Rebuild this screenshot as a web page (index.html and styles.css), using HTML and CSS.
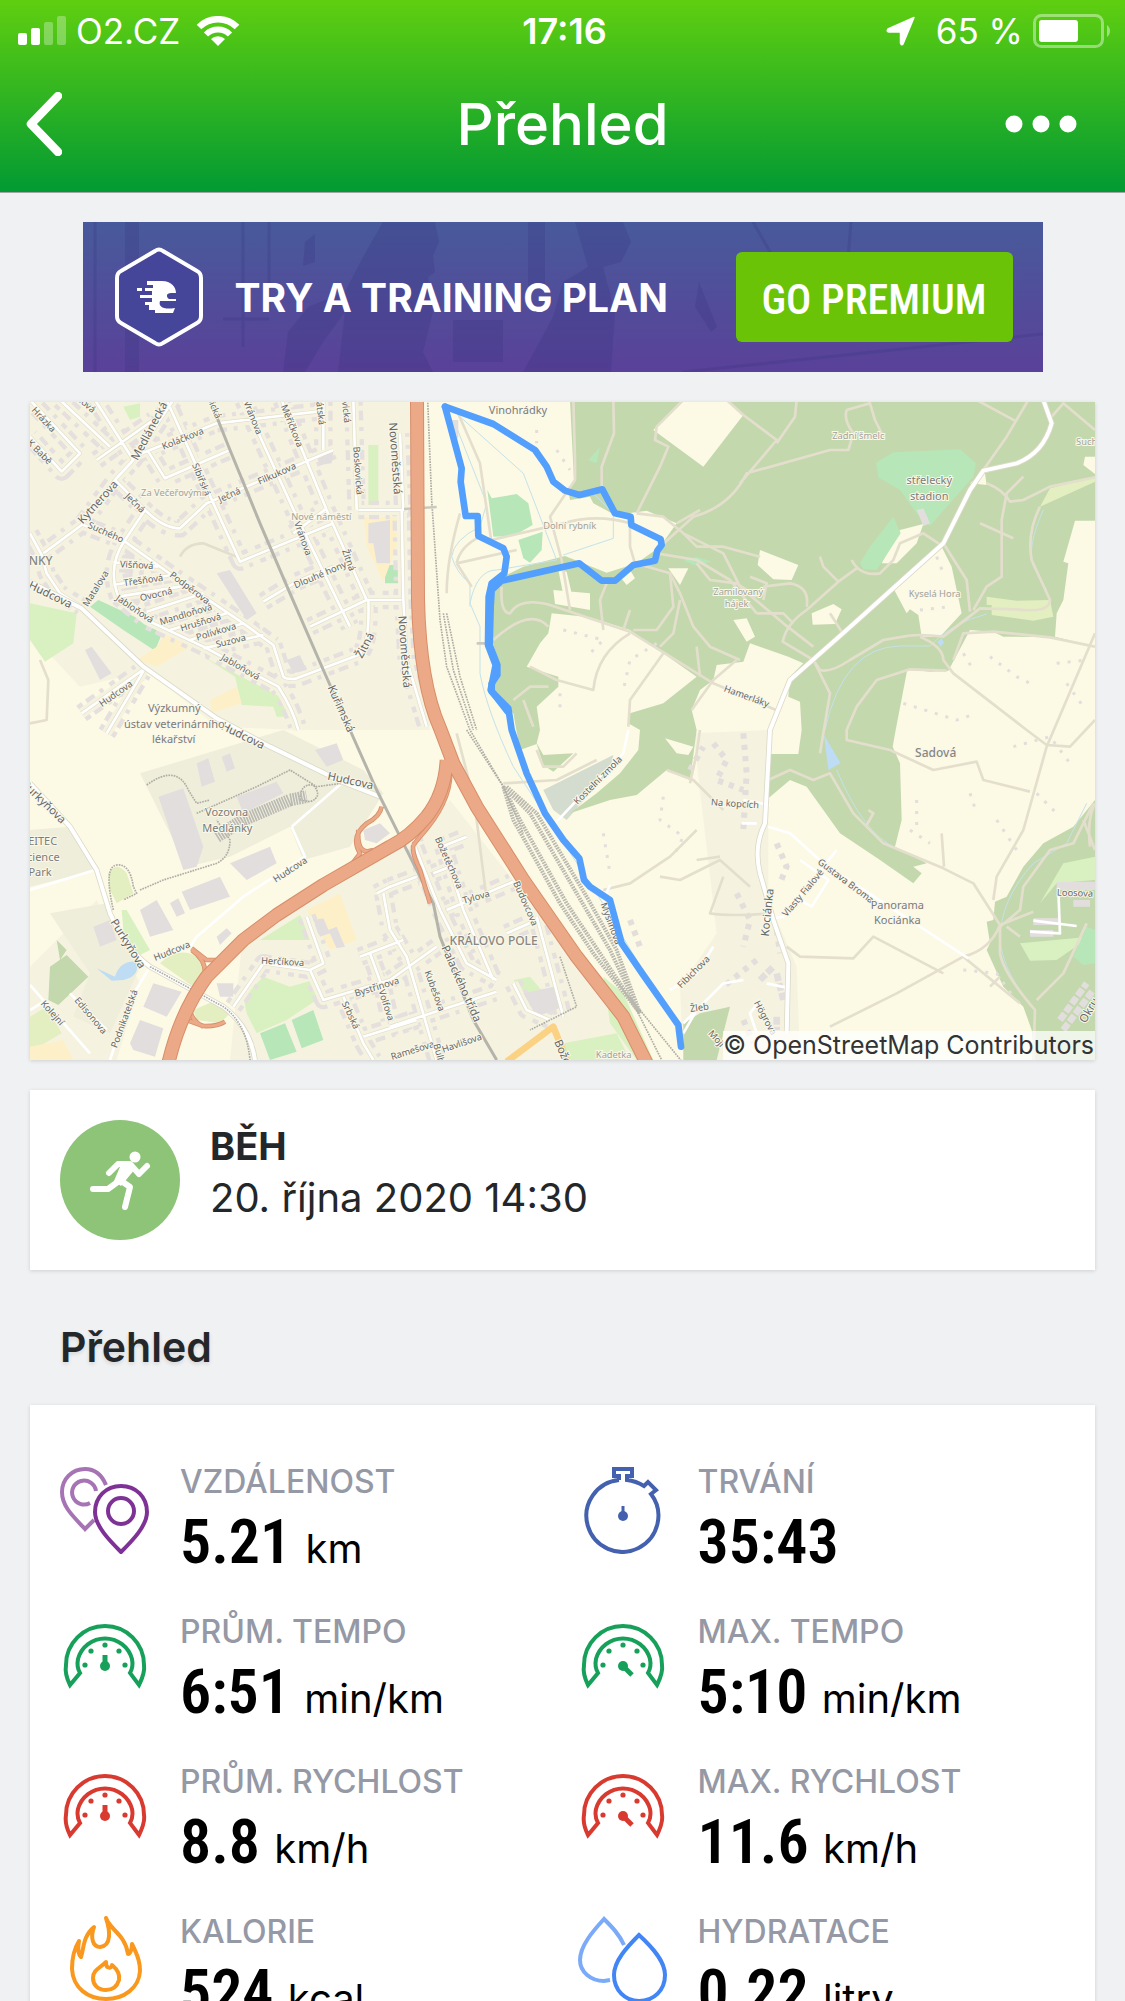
FILE: index.html
```html
<!DOCTYPE html>
<html lang="cs">
<head>
    <meta charset="UTF-8">
    <meta name="viewport" content="width=device-width, initial-scale=1.0">
    <title>Přehled</title>
    <link rel="stylesheet" href="styles.css">
</head>
<body>

    <!-- shared icons -->
    <svg class="defs" width="0" height="0">
        <defs>
            <g id="gauge">
                <path d="M10 71 C6 63 5 57 6 51 A39 39 0 0 1 84 51 C85 57 83 63 79 71 L70 59 C73 54 73 50 72 45 A28 28 0 0 0 18 45 C17 50 17 54 20 59 Z" fill="none" stroke="currentColor" stroke-width="4"/>
                <g fill="currentColor">
                    <circle cx="25" cy="51" r="2.6"/>
                    <circle cx="31" cy="37" r="2.6"/>
                    <circle cx="45" cy="31" r="2.6"/>
                    <circle cx="59" cy="37" r="2.6"/>
                    <circle cx="65" cy="51" r="2.6"/>
                    <circle cx="45" cy="52" r="5"/>
                </g>
            </g>
        </defs>
    </svg>

    <header class="header">
        <div class="status-bar">
            <div class="status-left">
                <svg class="signal" viewBox="0 0 48 30">
                    <g fill="#fff">
                        <rect x="0" y="17" width="9" height="12" rx="2"/>
                        <rect x="13" y="12" width="9" height="17" rx="2"/>
                        <rect x="26" y="6" width="9" height="23" rx="2" opacity=".3"/>
                        <rect x="39" y="0" width="9" height="29" rx="2" opacity=".3"/>
                    </g>
                </svg>
                <span>O2.CZ</span>
                <svg class="wifi" viewBox="0 0 44 30">
                    <path d="M3 11 A27 27 0 0 1 41 11" fill="none" stroke="#fff" stroke-width="6.5"/>
                    <path d="M10 18.5 A17 17 0 0 1 34 18.5" fill="none" stroke="#fff" stroke-width="6"/>
                    <path d="M22 30 L15 23 A10 10 0 0 1 29 23 Z" fill="#fff"/>
                </svg>
            </div>
            <div class="status-time">17:16</div>
            <div class="status-right">
                <svg class="location" viewBox="0 0 30 30">
                    <path d="M28 1.500 L17 28 Q15.500 30 14.500 27 V16 H3 Q0 15.500 2 13 Z" fill="#fff" stroke="#fff" stroke-width="1.500" stroke-linejoin="round"/>
                </svg>
                <span>65 %</span>
                <svg class="battery" viewBox="0 0 78 34">
                    <rect x="1.500" y="1.500" width="68" height="31" rx="7" fill="none" stroke="#fff" stroke-width="3" opacity=".42"/>
                    <rect x="6" y="6" width="39" height="22" rx="3" fill="#fff"/>
                    <path d="M74 11 C78 14 78 20 74 23 Z" fill="#fff" opacity=".45"/>
                </svg>
            </div>
        </div>
        <nav class="nav">
            <button class="nav-btn back" aria-label="Zpět">
                <svg viewBox="0 0 36 64"><path d="M32 4 L5 32 L32 60" fill="none" stroke="#fff" stroke-width="8.500" stroke-linecap="round" stroke-linejoin="round"/></svg>
            </button>
            <h1>Přehled</h1>
            <button class="nav-btn more" aria-label="Více">
                <svg viewBox="0 0 72 18"><g fill="#fff"><circle cx="9" cy="9" r="8.500"/><circle cx="36" cy="9" r="8.500"/><circle cx="63" cy="9" r="8.500"/></g></svg>
            </button>
        </nav>
    </header>

    <main class="content">

        <section class="banner">
            <svg class="banner-bg" viewBox="0 0 960 150" preserveAspectRatio="xMidYMid slice">
                <g fill="#33307c" opacity=".22">
                    <path d="M300 0 H352 L356 20 L350 34 L352 50 L345 55 L350 90 L340 130 L350 150 H255 L262 90 L240 120 L222 150 H200 L205 110 L225 85 L262 70 L280 35 Z"/>
                    <path d="M492 0 H540 L548 20 L538 40 L520 45 L532 90 L528 150 H440 L470 95 L480 60 L505 45 Z"/>
                    <path d="M370 98 H420 V140 H370 Z"/>
                    <path d="M222 20 L232 12 V40 L220 44 Z"/>
                    <path d="M445 0 H462 V65 H445 Z"/>
                    <path d="M42 0 H56 V150 H42 Z"/>
                    <path d="M616 60 L634 105 L628 110 L612 85 Z"/>
                </g>
                <g fill="none" stroke="#33307c" stroke-width="3" opacity=".22">
                    <path d="M12 0 V150 M160 0 V125 M186 0 V90 M140 97 H186 M768 0 L764 50 M600 150 L960 112 M670 0 L710 70"/>
                </g>
            </svg>
            <svg class="banner-logo" viewBox="0 0 88 100">
                <path d="M40 4 Q44 1 48 4 L82 24 Q86 26 86 31 V69 Q86 74 82 76 L48 96 Q44 99 40 96 L6 76 Q2 74 2 69 V31 Q2 26 6 24 Z" fill="#454699" stroke="#fff" stroke-width="4"/>
                <path d="M32 34 H47 C56 34 61 40 61 46 H56 C51 46 51 50 54 52 H61 V54 H45 C43 60 49 63 60 61 L58 66 H40 V63 H34 V58 H30 V55 H37 V51 H25 V48 H37 V44 H30 V41 H38 V38 H32 Z" fill="#fff"/>
                <path d="M22 41 H27 V44 H22 Z" fill="#fff"/>
            </svg>
            <p class="banner-text">TRY A TRAINING PLAN</p>
            <button class="premium">GO PREMIUM</button>
        </section>

        <section class="map">
            <svg class="map-canvas" viewBox="0 6 3195 1974">
                <defs>
                    <path id="streets" d="M0 400 L35 465 L50 520 L90 580 L155 620
                        M40 460 L155 375 L255 240 L310 180 L430 0
                        M195 0 L310 180 M90 0 L240 140 M200 180 L370 60 M0 0 L150 160 L95 215 L0 110
                        M410 0 L500 200 L630 485 L910 370 M355 155 L405 235 L600 150 M310 170 L560 70 L860 35
                        M255 240 L345 330 Q400 385 450 385 L530 310 L910 150 M345 330 L285 420 Q230 500 265 590
                        M160 375 L285 425 L425 525 L640 670 L730 735 M250 487 L385 500 M250 555 L425 525 M265 590 L450 560
                        M350 635 L520 580 M420 690 L590 640 M480 720 L640 670 M520 745 L700 705
                        M265 590 L350 660 L520 740 L745 860 Q790 930 805 990 M730 735 L760 830 Q770 840 800 835 L985 765 Q1020 740 1015 600
                        M640 0 L800 350 L960 680 M755 0 L890 330 L1010 600 M700 605 L800 545 L910 500 M840 680 L1010 600 H1115
                        M880 0 V150 M985 330 H1120 L1110 100 M970 0 L980 330 M790 400 L890 325
                        M1115 330 L1120 600 L1130 780 L1190 980
                        M230 1000 L345 805 M155 940 L345 805"/>
                    <path id="streets2" d="M1240 1340 L1300 1530 L1390 1740 M1150 1310 L1155 1340 L1230 1530 L1310 1690 L1400 1740
                        M1235 1340 L1310 1310 M1210 1420 L1260 1400 M1250 1530 L1450 1445 M1430 1600 L1520 1560
                        M1080 1460 L1160 1430 M1080 1590 L1130 1670 L1220 1980 M1080 1740 L1220 1640 M1080 1880 L1400 1775
                        M1450 1750 L1490 1830 L1560 1860 M1520 1550 L1600 1850
                        M830 1550 L880 1690 L840 1710 L880 1800 L1080 1740 M610 1820 L700 1690 L840 1710 M990 1670 L1120 1620
                        M1040 1480 L1080 1460 M1060 1480 L1080 1590 M1020 1660 L1060 1770 L1080 1860 M940 1790 L1000 1930 L1030 1980 M1000 1910 L1160 1860"/>
                    <path id="main-roads" d="M0 545 L155 625 L340 800 L560 955 L720 1040 L935 1145 L1050 1190
                        M0 1150 L120 1280 L200 1410 L240 1540 Q290 1650 360 1700 L580 1820 Q660 1880 675 1980
                        M3040 0 L3065 70 Q3040 160 2960 190 L2860 212 L2820 270 L2740 430 L2450 690 L2280 840 L2220 990 L2205 1270 Q2170 1340 2190 1420 L2230 1560 L2275 1690 L2270 1900"/>
                    <path id="ramps" d="M1150 1335 Q1145 1360 1170 1410 L1200 1510 M1260 1100 Q1270 1200 1170 1310 L1150 1335 M1055 1220 Q1050 1250 1010 1270 Q960 1310 990 1360 L960 1400 M985 1290 Q980 1370 1030 1350 M485 1645 L530 1680 H560 M485 1650 Q530 1680 525 1730 M470 1860 L520 1878 Q560 1880 585 1865 M480 1820 Q480 1860 520 1880"/>
                    <path id="motorways" d="M1250 1080 Q1245 1180 1190 1250 Q1140 1310 1080 1340 L880 1455 L740 1545 L640 1620 L530 1730 Q450 1840 415 1990
                        M1161 0 L1164 600 Q1170 850 1230 985 L1270 1090 L1340 1220 L1480 1440 L1640 1670 L1780 1850 L1850 1990"/>
                </defs>

                <rect class="land" x="0" y="0" width="3195" height="1980"/>

                <!-- built-up areas -->
                <path class="urban" d="M0 0 H1160 V640 L1200 990 H800 L560 980 L345 805 L150 930 L0 700 Z"/>
                <path class="urban" d="M0 1700 L200 1500 L330 1750 L260 1980 H0 Z M640 1590 L850 1490 L1080 1360 L1260 1200 L1480 1480 L1860 1980 H600 Z"/>
                <path class="urban" d="M1990 1000 L2215 990 V1500 L2300 1700 L2310 1980 H1960 L1950 1760 L2060 1600 Z"/>
                <path class="farm" d="M0 700 L150 860 L340 815 L210 940 L0 1010 Z"/>
                <path class="works" d="M330 1120 L760 990 L1000 1110 L1060 1180 L960 1340 L820 1380 L780 1280 L600 1370 L470 1400 Z"/>
                <path class="works" d="M0 1290 L120 1280 L200 1410 L0 1460 Z M60 1540 L230 1510 L330 1700 L240 1900 L130 1850 L180 1720 Z"/>
                <path class="quarry" d="M1540 1170 L1750 1065 L1740 1110 L1610 1260 L1570 1230 Z"/>

                <!-- woods -->
                <path class="forest" d="M1620 0 L1632 240 L1615 270 L1620 300 L1680 290 L1690 310 L1755 345 L1850 332 L1940 370 L1890 440 L1820 490 L1730 518 L1605 468 L1480 500 L1410 535 L1385 600 L1380 700 L1410 800 L1385 890 L1450 940 L1470 1050 L1520 1032 L1540 1095 L1570 1115 L1630 1060 L1540 1065 L1520 1030 L1530 990 L1520 920 L1585 860 V830 L1490 800 L1530 730 L1555 700 L1565 640 L1680 652 L1800 690 L2000 830 L1900 910 L1800 940 L1795 970 L1830 990 L1825 1050 L1770 1120 L1700 1180 L1620 1240 L1740 1200 L1820 1185 L1910 1110 L1980 1140 L2000 990 L1985 930 L2010 870 L2050 840 L2060 795 L2140 785 L2160 730 L2275 770 L2320 790 L2280 830 L2275 890 L2310 905 L2315 990 L2305 1062 H2215 V1195 L2280 1140 L2330 1160 L2430 1300 L2550 1380 L2650 1450 L2675 1420 L2650 1400 L2690 1390 L2595 1340 L2615 1260 L2610 1090 L2588 1040 L2597 990 L2632 808 L2700 815 L2755 812 L2820 690 L2890 695 L2920 710 L3070 712 L3195 740 V0 Z"/>
                <path class="forest" d="M3195 1200 L3130 1280 L3040 1330 L2980 1400 L2930 1490 L2895 1505 L2890 1560 L2870 1565 L2880 1630 L2870 1650 L2920 1760 L2980 1820 L3005 1890 L3015 1980 H3195 Z"/>
                <path class="forest" d="M55 1800 L60 1700 L110 1665 L175 1730 L85 1815 Z M1960 1980 V1870 L2010 1840 L2100 1820 L2060 1980 Z M80 1620 L110 1650 L90 1680 Z"/>

                <!-- clearings -->
                <path class="land" d="M1960 0 L1870 90 L2020 200 L2140 45 L2085 0 Z M2190 450 L2305 495 L2285 540 L2230 538 L2183 495 Z M1915 505 L1975 505 L1950 555 Z M1570 570 L1680 580 V630 L1575 612 Z M1585 510 L1610 515 L1625 580 L1600 585 Z M1770 530 L1800 510 L1815 535 L1790 555 Z M2110 660 L2150 655 L2175 710 L2150 725 Z M2345 640 L2410 612 L2435 628 L2415 672 L2348 674 Z"/>
                <path class="land" d="M2590 565 L2735 440 L2765 500 L2795 640 L2730 710 H2675 L2665 645 L2640 628 L2630 640 Z M3135 362 H3195 V740 L3075 710 L3080 640 L3100 600 L3115 490 L3100 485 Z M3165 170 H3195 V222 L3160 195 Z M1905 1015 L1990 1040 L1975 1065 L1940 1060 Z M2610 390 L2680 372 L2660 430 L2600 490 H2555 Z M2820 250 L2865 220 L2870 255 Z"/>
                <path class="meadow" d="M3030 320 L3060 265 L3195 232 V245 Z M2870 590 L2960 602 L3060 600 L3070 650 L3010 662 L2885 645 V615 H2870 Z M235 1420 Q260 1380 290 1420 L310 1480 L260 1510 L240 1470 Z M390 1690 Q450 1630 520 1680 V1740 L490 1760 Z M490 1830 L560 1800 L600 1840 L570 1870 L500 1860 Z M0 1850 L50 1820 L95 1900 L0 1955 Z"/>
                <path class="park" d="M0 610 L140 640 L130 730 L45 785 L0 720 Z M280 20 L330 10 V50 L300 60 Z M1015 135 H1045 V320 H1015 Z M520 770 L750 890 L775 950 H740 L730 920 L635 915 L615 830 Z M690 1620 L810 1545 L850 1620 Z M640 1790 L700 1730 L780 1760 L850 1740 L860 1800 L770 1860 L680 1900 L650 1840 Z M1720 1730 L1780 1780 L1870 1980 H1820 L1740 1870 Z M1600 1930 L1760 1900 L1800 1980 H1600 Z M3030 1510 L3100 1390 L3195 1370 V1440 L3080 1450 Z M2970 1630 L3180 1610 L3080 1680 L3000 1682 Z M1450 1740 L1500 1730 L1560 1800 L1530 1830 Z M275 1530 L290 1530 L360 1650 L320 1670 L280 1590 Z"/>
                <path class="pitch" d="M1372 270 L1385 295 L1460 282 L1495 310 L1508 375 L1450 408 L1390 410 Z M1465 420 L1538 395 L1535 450 L1500 488 L1480 475 Z M180 620 L205 600 L400 690 L375 752 L280 690 Z M2538 188 L2590 157 L2790 148 L2838 190 L2830 230 L2700 378 L2660 340 L2610 270 L2545 232 Z M2490 490 L2520 440 L2590 350 L2612 400 L2540 510 L2500 508 Z M690 1900 L765 1870 L800 1955 L720 1980 Z M785 1860 L850 1830 L880 1920 L815 1945 Z M3130 1670 L3170 1580 L3195 1590 V1690 L3160 1695 Z M1065 495 H1110 V550 H1065 Z M1675 180 L1710 140 L1700 190 Z M1960 480 L2000 470 L2045 485 L1990 495 Z"/>
                <path class="school" d="M1000 350 H1100 V440 L1060 545 L1010 440 Z M540 900 L620 860 L635 910 L545 940 Z M380 740 L410 700 L480 740 L380 800 L320 780 Z M830 1530 L930 1480 L980 1620 L900 1650 Z M0 1940 L100 1920 L130 1980 H0 Z"/>
                <path class="water" d="M200 1705 L255 1730 Q270 1680 320 1685 Q330 1730 280 1740 L245 1742 Z M2382 1005 L2432 1090 L2395 1110 Z M2722 725 L2735 715 L2742 728 L2732 740 Z"/>
                <path class="stream" d="M1290 50 L1480 220 L1580 480 L1400 510 Q1340 510 1320 610 L1350 680 V820 Q1370 930 1450 1100 L1700 1480 L1940 1880 M1275 70 L1370 310 L1350 380 Q1270 420 1265 470 Q1280 520 1320 550 V620 M1690 280 L1750 340 V415 L1600 465 M2385 990 Q2440 740 2610 738 H2700 Q2760 670 2870 642 M2420 1110 Q2500 1300 2600 1345 L2740 1405 M3170 1210 L3110 1330 L3010 1390 Q2910 1500 2910 1620 Q2920 1720 3015 1830 M3040 330 Q2990 440 3010 500 L3050 570"/>

                <!-- houses along the streets -->
                <use href="#streets" class="houses"/>
                <use href="#streets2" class="houses"/>
                <use href="#streets" class="yards"/>
                <use href="#streets2" class="yards"/>
                <path class="building" d="M1015 370 L1080 360 V490 H1040 L1030 430 H1015 Z M385 1190 L460 1165 L520 1340 L500 1400 L460 1410 Z M500 1090 L535 1075 L555 1145 L515 1160 Z M575 1070 L600 1060 L615 1105 L590 1115 Z M620 1190 L740 1145 L760 1180 L640 1240 Z M455 1475 L570 1430 L600 1490 L480 1530 Z M330 1530 L380 1500 L430 1590 L360 1610 Z M600 1390 L720 1340 L740 1390 L650 1440 Z M420 1510 L445 1495 L465 1540 L440 1550 Z M340 1820 L370 1750 L455 1775 L410 1850 Z M300 1930 L330 1860 L400 1885 L375 1970 L310 1950 Z M855 1050 L920 1030 L940 1080 L890 1100 Z M190 1580 L240 1560 L260 1620 L210 1640 Z M560 1610 L590 1585 L605 1600 L570 1635 Z M860 170 L910 155 L905 190 L870 195 Z M560 520 L600 510 L680 640 L650 660 Z M165 750 L185 740 L245 820 L210 840 Z M1480 1780 L1570 1760 L1600 1820 L1520 1850 Z M1000 1290 L1050 1270 L1080 1300 L1040 1330 L1005 1320 Z M3080 1445 H3195 V1470 H3080 Z M3010 1555 H3090 V1575 H3010 Z M3000 1590 H3070 V1610 H3000 Z M3130 1500 H3180 V1520 H3130 Z M770 780 L810 765 L830 810 L790 820 Z M560 1750 H610 V1790 H570 Z M850 1560 L880 1555 L900 1600 L870 1610 Z M895 1590 L920 1580 L945 1640 L920 1645 Z M1260 60 H1285 V115 H1270 Z M2660 330 L2680 325 L2700 370 L2680 378 Z"/>
                <path class="specks" d="M1520 90 V130 M1580 150 L1620 210 M1880 730 L1800 780 L1780 870 M1600 690 L1720 720 L1680 760 M1590 880 V940 M2670 630 L2760 620 M2720 470 L2740 520 M2800 760 L2830 810 M2880 770 L2960 830 L3000 850 M3080 790 L3170 780 M3110 850 L3160 920 M2620 910 L2780 960 L2840 940 M2640 1290 L2700 1330 M2660 1200 V1290 M2820 1180 L2840 1240 M2900 1260 L2960 1350 M2950 1040 L3060 1010 L3120 1090 M3020 1180 L3080 1240 M2800 1710 L2900 1720 L2950 1790 M1900 1190 L1890 1260 L1960 1310 L1930 1370 M1720 1300 L1740 1420"/>
                <path class="cottages" d="M1980 1110 L2020 1040 M2050 1030 L2090 1080 L2060 1140 L2140 1170 M1800 1560 L1830 1640 M2240 1330 L2270 1400 L2250 1450 M2140 1000 L2150 1120 L2140 1290 M2240 1590 L2250 1660 M2120 1480 L2160 1560 L2140 1640 M2180 1680 L2080 1760 M2140 1860 L2170 1930"/>
                <path class="shed" d="M3090 1860 L3170 1750 M3100 1890 L3190 1770 M2190 1740 L2230 1700 M2240 1720 L2260 1800 M2240 1850 V1890"/>

                <!-- paths -->
                <g class="track">
                    <path d="M1630 0 L1635 180 L1635 240 L1560 350 L1595 480 L1620 630 M1750 0 L1752 100 L1715 200 V265 M1280 30 L1350 190 L1385 430 M1385 420 L1600 370 Q1700 340 1800 370 M1280 490 Q1290 440 1350 410 M1280 490 L1460 450 M1280 490 L1325 560 M1250 580 Q1250 480 1290 340 M1415 560 Q1410 640 1440 640 Q1470 590 1560 615 L1800 695 L2050 850 L2250 935 M1390 720 Q1500 620 1555 680"/>
                    <path d="M2090 0 L2140 45 L2240 120 L2130 250 M2300 0 L2295 50 L2240 130 M1960 0 L1880 80 L1875 120 L1915 140 L1890 200 L1820 340 M1800 350 L1800 440 L1815 490 M1890 440 L1990 350 Q2100 320 2150 220 L2400 150 M1940 370 L2010 330 M1820 340 L1900 350 L1960 400 L2000 440 L2080 440 L2190 470 M1880 460 L2000 480 L2100 540 L2180 640 M1815 490 L1920 520 L1950 580 L1990 680 L2040 740 L2130 780 M2000 490 L2040 540 L2120 550 L2180 590 M1960 400 L2080 460 L2130 560 L2260 670 L2350 740 M2200 560 L2280 550 Q2340 560 2330 620 M2160 530 L2210 550 L2200 600"/>
                    <path d="M1920 520 L1930 620 L1880 690 L1810 690 M1950 600 L1930 700 L1890 740 M2000 740 L2010 830 M1720 690 L1710 600 L1730 550 M1780 690 L1800 630 M2180 640 L2260 640 L2290 670"/>
                    <path d="M2450 30 Q2440 60 2470 100 L2455 150 H2400 M2450 30 L2520 10 L2535 60 L2560 110 M2370 470 L2380 500 L2425 545 L2330 630 Q2270 670 2258 725 L2350 780 M2425 545 L2480 505 M2465 480 Q2490 530 2550 520 L2590 480 L2610 430 L2680 400 L2740 440 M2435 695 L2400 640 M2840 0 L2960 65 M2995 0 L2930 110 L2860 210 M3065 50 L3100 10 L3195 90 M2870 250 Q2920 270 2940 305 L2980 300 L3060 260 L3195 232"/>
                    <path d="M2980 230 L2930 280 L2915 360 V530 L2870 560 L2830 630 M2850 370 L2950 415 M3030 320 Q2990 400 3005 480 L3060 600 Q3060 640 2960 628 L2850 625 L2740 710 Q2660 700 2620 710 L2560 720 L2460 780 Q2400 820 2370 810 L2350 780 L2400 880 L2370 1060 M2820 635 L2810 540 L2740 430 M2670 710 Q2740 740 2740 780 L2770 820 L2990 990 L3050 1035 L3120 1040 L3195 960 M2770 780 L2800 700 L2890 695 L3060 712 L3195 740 M2750 812 L2640 808 L2540 840 L2480 920 L2450 990 L2450 1020 L2580 1050 L2710 1110 L2840 1085 L2860 1140 L3000 1175 M3195 700 L3050 1040 L2980 1290 L2900 1430 L2890 1500"/>
                    <path d="M2215 1140 L2280 1110 L2350 1140 L2400 1120 L2470 1240 L2560 1330 L2740 1405 L2830 1450 L2910 1575 Q2880 1650 2800 1670 L2600 1780 L2400 1880 M2510 1275 L2530 1240 L2515 1230 M2735 1300 L2742 1400 M3195 1210 Q3170 1260 3180 1340 M3190 1210 L3130 1330 L3060 1350 L2980 1460 L2970 1530 L2910 1580 L2910 1660 Q2920 1720 3015 1830 L3010 1980 M3020 1800 L3100 1720 L3170 1570 M2910 1575 L3010 1535 M3195 1350 L3160 1260 M2930 1580 L2970 1610 M2270 1640 L2310 1670 L2470 1675 L2530 1610 L2740 1720 M2800 1670 L2970 1810 M2880 1760 L2910 1730"/>
                    <path d="M1420 1150 L1580 1140 L1700 1080 M1520 1050 L1540 1100 L1600 1100 L1640 1060 M1450 900 L1500 860 L1555 860 M1480 900 L1510 980 M1500 800 L1580 840 L1690 870 Q1700 760 1800 700 M1900 760 L1800 900 L1795 980 M1985 930 L2050 840 L2120 780 M1720 1470 L1800 1450 L1920 1370 L2000 1290 M1890 1430 L1950 1440 L2070 1380 L2160 1460 M2070 1370 L2000 1380 M2220 1540 Q2100 1550 2040 1540 L2080 1430 M1980 1150 L2000 1060 L2010 990 M2080 1230 L1990 1140 L1910 1110 M1330 1180 L1370 1500 M1280 1000 L1340 1230 M30 780 L55 840 L50 960 L0 970 M450 470 Q470 430 520 430 L620 470"/>
                </g>

                <!-- streets -->
                <use href="#streets" class="casing"/>
                <use href="#streets2" class="casing"/>
                <use href="#streets" class="street"/>
                <use href="#streets2" class="street"/>
                <path class="street" d="M785 1280 L825 1370 L640 1490 L500 1610 L480 1640 M935 1150 L785 1280 M360 1700 L300 1800 L240 1980 M0 1755 L180 1960 M0 1830 L50 1800 M0 1470 L195 1410 M120 1780 L230 1890 M1580 1265 L1660 1180 L1780 1060 L1795 990 M1720 1500 L1740 1455 M2220 1215 L2140 1200 M2180 1270 L2135 1270 M2200 1560 L2260 1550 L2420 1350 M2310 1380 L2395 1440 L2345 1520 L2310 1500 M2215 1280 L2280 1300 L2380 1390 L2815 1675 M2210 1750 L2280 1765 M2190 1800 L2160 1840 L2180 1900 M3085 1470 L3090 1600 L3000 1595 M3010 1562 L3140 1578 M1960 1870 L2080 1750 L2140 1740 M1920 1770 L2000 1720 L2050 1640 M1960 1900 L2000 1830"/>
                <use href="#main-roads" class="road-casing"/>
                <use href="#main-roads" class="road"/>
                <path class="yellow-road" d="M1430 1985 L1570 1880 L1610 1980"/>

                <!-- railway -->
                <path class="tram" d="M540 0 L600 150 L690 370 L780 580 L880 810 L960 990 L1040 1170 L1080 1250 L1210 1510 L1230 1610 L1330 1860 L1400 1980"/>
                <path class="rail" d="M1193 0 L1205 300 L1230 660 L1250 800 L1320 990 L1420 1160 M1240 640 L1270 810 L1330 990 M1250 640 L1290 830 L1340 990 M350 1155 Q440 1090 475 1170 L500 1210 L540 1200 M500 1240 L680 1160 L780 1110 L860 1160 L935 1150 M330 1470 L400 1440 L560 1390 Q600 1370 600 1320 L560 1260 M250 1530 Q220 1400 260 1395 Q300 1390 310 1460 L320 1480 L280 1500 M360 1700 L580 1820 Q650 1870 660 1980 M1590 1670 L1640 1820 L1500 1890 M810 1200 Q810 1150 850 1155 Q880 1190 840 1205 Z"/>
                <path class="yard" d="M560 1310 L640 1260 L780 1200 L830 1190"/>
                <path class="rail-yard" d="M1420 1160 L1450 1260 L1590 1510 L1690 1660 L1830 1840 M1420 1160 L1470 1260 L1610 1510 L1710 1660 L1830 1840 M1420 1160 L1500 1240 L1640 1480 L1740 1650 L1830 1840 M1430 1160 L1520 1240 L1670 1490 L1760 1650 L1830 1840"/>
                <path class="rail" d="M1310 990 L1420 1160 L1480 1300 M1830 1830 L1960 1990 M1820 1830 L1900 1990"/>
                <path class="bridge" d="M1122 327 L1220 321 M1340 730 H1370"/>

                <!-- motorway -->
                <use href="#ramps" class="ramp-edge"/>
                <use href="#ramps" class="ramp"/>
                <use href="#motorways" class="motorway-edge"/>
                <use href="#motorways" class="motorway"/>

                <!-- labels -->
                <g class="label">
                    <text transform="translate(42 58) rotate(47)">Hrázka</text>
                    <text transform="translate(30 155) rotate(45)">K Babě</text>
                    <text transform="translate(170 12) rotate(40)">ková</text>
                    <text transform="translate(458 115) rotate(-22)">Koláčkova</text>
                    <text transform="translate(515 238) rotate(68)">Sibiřská</text>
                    <text transform="translate(557 30) rotate(66)">ická</text>
                    <text transform="translate(598 284) rotate(-24)">Ječná</text>
                    <text transform="translate(316 308) rotate(44)">Ječná</text>
                    <text transform="translate(740 220) rotate(-24)">Filkukova</text>
                    <text transform="translate(670 52) rotate(68)">Vránova</text>
                    <text transform="translate(787 77) rotate(68)">Měřičkova</text>
                    <text transform="translate(873 40) rotate(84)">átská</text>
                    <text transform="translate(950 36) rotate(84)">vická</text>
                    <text transform="translate(985 212) rotate(86)">Boskovická</text>
                    <text transform="translate(820 415) rotate(70)">Vránova</text>
                    <text transform="translate(957 480) rotate(70)">Žitná</text>
                    <text transform="translate(870 523) rotate(-23)">Dlouhé hony</text>
                    <text transform="translate(228 396) rotate(24)">Suchého</text>
                    <text transform="translate(320 494) rotate(3)">Višňová</text>
                    <text transform="translate(340 540) rotate(-8)">Třešňová</text>
                    <text transform="translate(378 582) rotate(-13)">Ovocná</text>
                    <text transform="translate(480 563) rotate(37)">Podpěrova</text>
                    <text transform="translate(196 565) rotate(-58)">Matalova</text>
                    <text transform="translate(315 626) rotate(34)">Jabloňová</text>
                    <text transform="translate(467 642) rotate(-17)">Mandloňová</text>
                    <text transform="translate(512 666) rotate(-17)">Hrušňová</text>
                    <text transform="translate(558 694) rotate(-17)">Polívkova</text>
                    <text transform="translate(602 722) rotate(-14)">Suzova</text>
                    <text transform="translate(632 800) rotate(30)">Jabloňová</text>
                    <text transform="translate(257 880) rotate(-35)">Hudcova</text>
                    <text transform="translate(780 1408) rotate(-33)">Hudcova</text>
                    <text transform="translate(425 1652) rotate(-22)">Hudcova</text>
                    <text transform="translate(758 1684) rotate(3)">Herčíkova</text>
                    <text transform="translate(1040 1760) rotate(-17)">Bystřinova</text>
                    <text transform="translate(963 1845) rotate(65)">Srbská</text>
                    <text transform="translate(1070 1815) rotate(72)">Volfova</text>
                    <text transform="translate(68 1838) rotate(48)">Kolejní</text>
                    <text transform="translate(183 1846) rotate(50)">Edisonova</text>
                    <text transform="translate(282 1856) rotate(-70)">Podnikatelská</text>
                    <text transform="translate(1258 1388) rotate(66)">Božetěchova</text>
                    <text transform="translate(1338 1490) rotate(-16)">Tylova</text>
                    <text transform="translate(1488 1510) rotate(66)">Budovcova</text>
                    <text transform="translate(1215 1772) rotate(70)">Kubešova</text>
                    <text transform="translate(1295 1928) rotate(-19)">Havlišova</text>
                    <text transform="translate(1147 1950) rotate(-17)">Ramešova</text>
                    <text transform="translate(1228 1960) rotate(75)">Bulh</text>
                    <text transform="translate(1744 1570) rotate(70)">Myslínova</text>
                    <text transform="translate(1703 1140) rotate(-45)">Kostelní zmola</text>
                    <text transform="translate(2115 1210) rotate(4)">Na kopcích</text>
                    <text transform="translate(1990 1715) rotate(-45)">Fibichova</text>
                    <text transform="translate(2008 1822) rotate(-8)">Žleb</text>
                    <text transform="translate(2060 1915) rotate(48)">Moji</text>
                    <text transform="translate(2150 888) rotate(20)">Hamerláky</text>
                    <text transform="translate(2318 1478) rotate(-50)">Vlasty Fialové</text>
                    <text transform="translate(2448 1442) rotate(37)">Gustava Broma</text>
                    <text transform="translate(2207 1853) rotate(62)">Högrova</text>
                    <text transform="translate(3135 1478) rotate(2)">Loosova</text>
                </g>
                <g class="label mid">
                    <text transform="translate(356 92) rotate(-62)">Medlánecká</text>
                    <text transform="translate(202 305) rotate(-48)">Kytnerova</text>
                    <text transform="translate(62 582) rotate(26)">Hudcova</text>
                    <text transform="translate(1003 735) rotate(-62)">Žitná</text>
                    <text transform="translate(935 925) rotate(66)">Kuřimská</text>
                    <text transform="translate(640 1005) rotate(26)">Hudcova</text>
                    <text transform="translate(962 1140) rotate(12)">Hudcova</text>
                    <text transform="translate(43 1204) rotate(44)">Purkyňova</text>
                    <text transform="translate(296 1630) rotate(58)">Purkyňova</text>
                    <text transform="translate(1098 175) rotate(86)">Novoměstská</text>
                    <text transform="translate(1126 755) rotate(86)">Novoměstská</text>
                    <text transform="translate(1296 1750) rotate(66)">Palackého třída</text>
                    <text transform="translate(1600 1955) rotate(66)">Bože</text>
                    <text transform="translate(2210 1537) rotate(-84)">Kociánka</text>
                    <text transform="translate(3175 1830) rotate(-60)">Okru</text>
                </g>
                <g class="label place">
                    <text x="428" y="276">Za Večeřovými</text>
                    <text x="874" y="349">Nové náměstí</text>
                    <text x="1619" y="375">Dolní rybník</text>
                    <text x="2125" y="575">Zamilovaný</text>
                    <text x="2120" y="611">hájek</text>
                    <text x="2485" y="106">Zadní šmelc</text>
                    <text x="2714" y="580">Kyselá Hora</text>
                    <text x="3170" y="125">Such</text>
                    <text x="1751" y="1964">Kadetka</text>
                </g>
                <g class="label area">
                    <text x="1464" y="27">Vinohrádky</text>
                    <text x="433" y="923">Výzkumný</text>
                    <text x="433" y="970">ústav veterinárního</text>
                    <text x="431" y="1016">lékařství</text>
                    <text x="590" y="1233">Vozovna</text>
                    <text x="592" y="1281">Medlánky</text>
                    <text x="38" y="1321">EITEC</text>
                    <text x="40" y="1368">cience</text>
                    <text x="30" y="1415">Park</text>
                    <text x="2698" y="238">střelecký</text>
                    <text x="2698" y="285">stadion</text>
                    <text x="2602" y="1514">Panorama</text>
                    <text x="2602" y="1559">Kociánka</text>
                </g>
                <g class="label town">
                    <text x="32" y="480">NKY</text>
                    <text x="1391" y="1622">KRÁLOVO POLE</text>
                    <text x="2717" y="1058">Sadová</text>
                </g>

                <!-- recorded route -->
                <path class="route" d="M1245 20 L1390 72 L1515 150 L1550 200 L1570 245 L1605 272 L1648 285 L1717 268 L1755 340 L1802 350 L1804 375 L1892 418 L1895 435 L1882 452 L1875 482 L1810 495 L1755 542 H1715 L1648 490 L1415 542 L1385 570 L1382 620 L1379 735 L1402 795 V825 L1385 850 V875 L1435 925 L1445 990 L1490 1120 L1545 1240 L1600 1320 L1648 1375 L1662 1440 L1680 1460 L1740 1500 L1775 1630 L1840 1725 L1945 1875 L1953 1940"/>
                <path class="route" d="M1245 20 L1295 205 L1292 245 L1307 348 H1343 L1345 408 L1420 445 L1430 470 L1423 520 L1385 550 L1376 590 L1374 735 L1397 795 L1382 870 L1433 935"/>
            </svg>
            <div class="attribution">© OpenStreetMap Contributors</div>
        </section>

        <section class="card activity">
            <div class="activity-icon">
                <svg viewBox="0 0 120 120">
                    <circle cx="75" cy="37" r="5.500" fill="#fff"/>
                    <g fill="none" stroke="#fff" stroke-width="6" stroke-linecap="round" stroke-linejoin="round">
                        <path d="M49 53 L58 44 H70 L79 54 L87 46"/>
                        <path d="M59 61 L48 69 H33"/>
                        <path d="M60 60 L70 67 L65 87"/>
                    </g>
                    <path d="M62 42 H71 L75 49 L66 60 L61 66 L54 61 Z" fill="#fff"/>
                </svg>
            </div>
            <div class="activity-text">
                <h2>BĚH</h2>
                <p>20. října 2020 14:30</p>
            </div>
        </section>

        <h2 class="section-title">Přehled</h2>

        <section class="card stats">
            <div class="stat">
                <svg class="stat-icon" viewBox="0 0 90 90">
                    <g fill="none" stroke-width="4">
                        <g stroke="#a673b5">
                            <path d="M46 21 C41 9 34 5 25 5 C12 5 2 15 2 28 C2 43 14 53 25 65 L34 56"/>
                            <path d="M36 27 A12 12 0 1 0 30 39"/>
                        </g>
                        <g stroke="#7f3296">
                            <path d="M61 88 C50 77 35 62 35 48 C35 33 46 22 61 22 C76 22 87 33 87 48 C87 62 72 77 61 88 Z"/>
                            <circle cx="61" cy="47" r="13"/>
                        </g>
                    </g>
                </svg>
                <div class="stat-text">
                    <div class="stat-label">VZDÁLENOST</div>
                    <div class="stat-value">5.21 <span>km</span></div>
                </div>
            </div>
            <div class="stat">
                <svg class="stat-icon" viewBox="0 0 90 90">
                    <path d="M41 16 V12 H36 V5 H54 V12 H49 V16 Q58 17 66 22 L70 18 L78 26 L73 30 A36 36 0 1 1 41 16" fill="none" stroke="#4361ae" stroke-width="4"/>
                    <circle cx="45" cy="52" r="5" fill="#4361ae"/>
                    <path d="M45 42 V52" stroke="#4361ae" stroke-width="3"/>
                </svg>
                <div class="stat-text">
                    <div class="stat-label">TRVÁNÍ</div>
                    <div class="stat-value">35:43</div>
                </div>
            </div>
            <div class="stat">
                <svg class="stat-icon green" viewBox="0 0 90 90">
                    <use href="#gauge"/>
                    <path d="M45 41 V52" stroke="currentColor" stroke-width="5"/>
                </svg>
                <div class="stat-text">
                    <div class="stat-label">PRŮM. TEMPO</div>
                    <div class="stat-value">6:51 <span>min/km</span></div>
                </div>
            </div>
            <div class="stat">
                <svg class="stat-icon green" viewBox="0 0 90 90">
                    <use href="#gauge"/>
                    <path d="M45 52 L54 61" stroke="currentColor" stroke-width="5"/>
                </svg>
                <div class="stat-text">
                    <div class="stat-label">MAX. TEMPO</div>
                    <div class="stat-value">5:10 <span>min/km</span></div>
                </div>
            </div>
            <div class="stat">
                <svg class="stat-icon red" viewBox="0 0 90 90">
                    <use href="#gauge"/>
                    <path d="M45 41 V52" stroke="currentColor" stroke-width="5"/>
                </svg>
                <div class="stat-text">
                    <div class="stat-label">PRŮM. RYCHLOST</div>
                    <div class="stat-value">8.8 <span>km/h</span></div>
                </div>
            </div>
            <div class="stat">
                <svg class="stat-icon red" viewBox="0 0 90 90">
                    <use href="#gauge"/>
                    <path d="M45 52 L54 61" stroke="currentColor" stroke-width="5"/>
                </svg>
                <div class="stat-text">
                    <div class="stat-label">MAX. RYCHLOST</div>
                    <div class="stat-value">11.6 <span>km/h</span></div>
                </div>
            </div>
            <div class="stat">
                <svg class="stat-icon" viewBox="0 0 90 90">
                    <g fill="none" stroke="#f9981d" stroke-width="4" stroke-linejoin="round">
                        <path d="M46 4 C50 16 65 20 68 40 C70 40 72 36 72 30 C79 44 80 50 80 57 C79 74 64 85 46 85 C28 85 13 74 12 55 C12 44 14 35 19 27 C17 38 19 41 21 43 C24 34 23 22 34 13 C30 24 33 33 40 33 C52 32 50 16 46 4 Z"/>
                        <path d="M46 48 C46 56 52 54 52 51 C58 56 60 61 59 66 C57 73 52 76 46 76 C38 76 33 71 33 64 C33 56 40 54 46 48 Z"/>
                    </g>
                </svg>
                <div class="stat-text">
                    <div class="stat-label">KALORIE</div>
                    <div class="stat-value">524 <span>kcal</span></div>
                </div>
            </div>
            <div class="stat">
                <svg class="stat-icon" viewBox="0 0 90 90">
                    <g fill="none" stroke-width="4">
                        <path d="M46 31 C41 20 34 13 26 5 C15 17 2 32 2 46 C2 58 13 67 26 67 L32 66" stroke="#7baaf9"/>
                        <path d="M61 21 C49 33 36 47 36 61 C36 76 47 87 61 87 C76 87 87 76 87 61 C87 47 74 33 61 21 Z" stroke="#4285f4"/>
                    </g>
                </svg>
                <div class="stat-text">
                    <div class="stat-label">HYDRATACE</div>
                    <div class="stat-value">0.22 <span>litry</span></div>
                </div>
            </div>
        </section>
    </main>

</body>
</html>
```

FILE: styles.css
```css
* {
    margin: 0;
    padding: 0;
    box-sizing: border-box;
}

html, body {
    height: 100%;
}

body {
    display: flex;
    flex-direction: column;
    font-family: Inter, "Liberation Sans", sans-serif;
    background-color: #f0f1f3;
    color: #24272a;
    overflow: hidden;
}

svg {
    display: block;
    flex-shrink: 0;
}

.defs {
    position: absolute;
}

button {
    border: none;
    background: none;
    cursor: pointer;
    font-family: inherit;
}

/* header */
.header {
    flex-shrink: 0;
    background: linear-gradient(#5fcf10, #029a33);
    border-bottom: 1px solid #a3a3a8;
    color: #fff;
}

.status-bar {
    display: grid;
    grid-template-columns: 1fr auto 1fr;
    align-items: center;
    height: 60px;
    padding: 2px 14px 0 18px;
    font-size: 35px;
}

.status-left,
.status-right {
    display: flex;
    align-items: center;
    gap: 10px;
}

.status-left span {
    margin-right: 6px;
}

.status-right {
    justify-content: flex-end;
}

.status-time {
    font-size: 36px;
    font-weight: 600;
}

.signal {
    width: 48px;
    height: 30px;
}

.wifi {
    width: 44px;
    height: 30px;
}

.location {
    width: 30px;
    height: 30px;
    margin-right: 10px;
}

.battery {
    width: 78px;
    height: 34px;
}

.nav {
    display: grid;
    grid-template-columns: 1fr auto 1fr;
    align-items: center;
    height: 132px;
    padding: 0 26px 4px;
}

.nav h1 {
    font-size: 58px;
    font-weight: 500;
}

.nav-btn {
    display: flex;
}

.more {
    justify-content: flex-end;
    padding-right: 22px;
}

.back svg {
    width: 36px;
    height: 64px;
}

.more svg {
    width: 72px;
    height: 18px;
}

/* page */
.content {
    flex: 1;
    min-height: 0;
    padding: 29px 30px 0;
}

.card {
    background-color: #fff;
    box-shadow: 0 1px 4px rgba(0, 0, 0, 0.14);
}

.banner {
    position: relative;
    display: flex;
    align-items: center;
    max-width: 960px;
    height: 150px;
    margin: 0 auto 30px;
    padding: 0 30px 0 32px;
    background: linear-gradient(#485a9b, #5a4199);
    overflow: hidden;
}

.banner-bg {
    position: absolute;
    top: 0;
    left: 0;
    width: 100%;
    height: 100%;
}

.banner-logo {
    position: relative;
    width: 88px;
    height: 100px;
    margin-right: 32px;
}

.banner-text {
    position: relative;
    flex: 1;
    color: #fff;
    font-size: 39px;
    font-weight: 700;
    white-space: nowrap;
}

.premium {
    position: relative;
    width: 277px;
    height: 90px;
    padding-top: 4px;
    border-radius: 6px;
    background-color: #6bc308;
    color: #fff;
    font-family: "Roboto Condensed", Roboto, sans-serif;
    font-size: 42px;
    font-weight: 500;
    white-space: nowrap;
}

/* map */
.map {
    position: relative;
    margin-bottom: 30px;
    box-shadow: 0 1px 4px rgba(0, 0, 0, 0.14);
}

.map-canvas {
    width: 100%;
    height: auto;
}

.map-canvas path,
.map-canvas use {
    stroke-linejoin: round;
}

.land { fill: #fcf9e5; }
.urban { fill: #f5f3e0; }
.farm { fill: #fcf9e5; }
.works { fill: #efeedb; }
.quarry { fill: #d3dccf; }
.forest { fill: #c3d8ad; }
.meadow { fill: #e3efc0; }
.park { fill: #d9f1c1; }
.pitch { fill: #b7e6b9; }
.school { fill: #fdf0c8; }
.water { fill: #bedcf3; }
.building { fill: #e3dede; }

.stream {
    fill: none;
    stroke: #c5e2ea;
    stroke-width: 3;
}

.houses {
    fill: none;
    stroke: #e5e0dd;
    stroke-width: 56;
    stroke-dasharray: 18 14 30 20 12 24;
}

.yards {
    fill: none;
    stroke: #f5f3e0;
    stroke-width: 30;
}

.specks,
.cottages {
    fill: none;
    stroke: #e3dedb;
    stroke-width: 9;
    stroke-dasharray: 9 24;
}

.cottages {
    stroke-width: 18;
    stroke-dasharray: 16 18;
}

.shed {
    fill: none;
    stroke: #e3dede;
    stroke-width: 20;
    stroke-dasharray: 24 6;
}

.track {
    fill: none;
    stroke: #e4dfcd;
    stroke-width: 8;
}

.casing {
    fill: none;
    stroke: #e2dfcb;
    stroke-width: 12;
}

.street {
    fill: none;
    stroke: #fff;
    stroke-width: 8;
}

.road-casing {
    fill: none;
    stroke: #dcdac8;
    stroke-width: 17;
}

.road {
    fill: none;
    stroke: #fff;
    stroke-width: 12;
}

.yellow-road {
    fill: none;
    stroke: #fbd283;
    stroke-width: 20;
}

.tram {
    fill: none;
    stroke: #b5b4ab;
    stroke-width: 9;
}

.rail {
    fill: none;
    stroke: #aeada5;
    stroke-width: 5;
    stroke-dasharray: 5 3;
}

.yard {
    fill: none;
    stroke: #bab9b3;
    stroke-width: 38;
    stroke-dasharray: 5 3;
}

.rail-yard {
    fill: none;
    stroke: #b9b8ae;
    stroke-width: 12;
    stroke-dasharray: 5 3;
}

.bridge {
    fill: none;
    stroke: #cbc9bf;
    stroke-width: 8;
}

.ramp-edge,
.motorway-edge {
    fill: none;
    stroke: #d98d69;
}

.ramp,
.motorway {
    fill: none;
    stroke: #eba987;
}

.ramp-edge { stroke-width: 14; }
.ramp { stroke-width: 9; }
.motorway-edge { stroke-width: 42; }
.motorway { stroke-width: 36; }

.route {
    fill: none;
    stroke: #539ffe;
    stroke-width: 20;
    stroke-linecap: round;
}

.label text {
    font-family: "Noto Sans", sans-serif;
    font-size: 28px;
    fill: #666;
    stroke: #faf8ea;
    stroke-width: 6px;
    paint-order: stroke;
    text-anchor: middle;
    dominant-baseline: central;
}

.label.mid text {
    font-size: 34px;
}

.label.place text {
    fill: #a3a298;
}

.label.area text {
    font-size: 33px;
    fill: #7b7b78;
}

.label.town text {
    font-size: 36px;
    font-weight: 500;
    fill: #878783;
}

.attribution {
    position: absolute;
    right: 0;
    bottom: 0;
    padding-right: 1px;
    background-color: rgba(255, 255, 255, 0.75);
    color: #333;
    font-size: 25px;
    line-height: 29px;
}

/* activity */
.activity {
    display: flex;
    gap: 30px;
    padding: 30px;
}

.activity-icon {
    width: 120px;
    height: 120px;
    border-radius: 50%;
    background-color: #8dc477;
}

.activity-text {
    font-size: 40px;
    line-height: 52px;
}

.activity-text h2 {
    font-size: 38px;
    font-weight: 700;
}

.section-title {
    padding: 52px 30px 33px;
    font-size: 41px;
    font-weight: 600;
    line-height: 50px;
    text-shadow: 0 2px 4px rgba(0, 0, 0, 0.12);
}

/* stats */
.stats {
    display: grid;
    grid-template-columns: 1fr 1fr;
    row-gap: 30px;
    padding: 57px 0 40px 30px;
}

.stat {
    display: flex;
    align-items: flex-start;
    gap: 30px;
    height: 120px;
}

.stat-icon {
    width: 90px;
    height: 90px;
    margin-top: 2px;
}

.green { color: #16a05a; }
.red { color: #d93a30; }

.stat-label {
    color: #9598a5;
    font-size: 32px;
    font-weight: 500;
    line-height: 40px;
}

.stat-value {
    color: #000;
    font-family: "Roboto Condensed", Roboto, sans-serif;
    font-size: 62px;
    font-weight: 600;
    line-height: 80px;
    white-space: nowrap;
}

.stat-value span {
    font-family: Inter, sans-serif;
    font-size: 40px;
    font-weight: 400;
}
```
